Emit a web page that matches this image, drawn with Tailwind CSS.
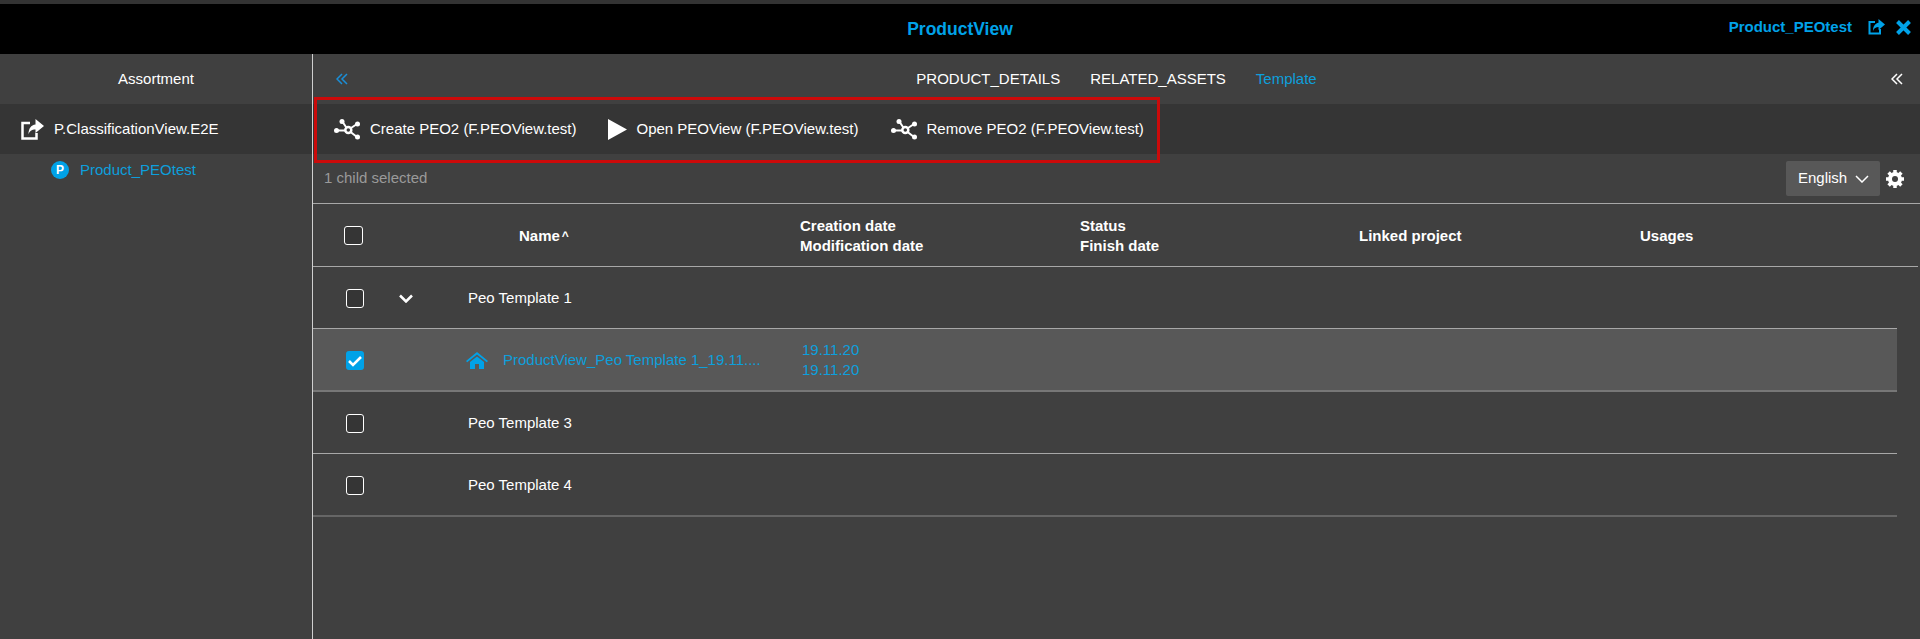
<!DOCTYPE html>
<html lang="en">
<head>
  <meta charset="UTF-8" />
  <title>ProductView</title>
  <script src="https://cdn.jsdelivr.net/npm/@tailwindcss/browser@4"></script>
</head>
<body class="h-[639px] overflow-hidden bg-[#404040] font-['Liberation_Sans',Arial,sans-serif] text-[15px] text-white">

  <!-- Top bar -->
  <header class="h-[54px] border-t-4 border-[#333333] bg-black flex items-center relative">
    <h1 class="w-full text-center text-[17.500px] font-bold text-[#00a2e8]">ProductView</h1>
    <div class="absolute right-[9px] top-0 h-full pb-1 flex items-center text-[#00a2e8]">
      <span class="font-bold">Product_PEOtest</span>
      <svg class="ml-[16px] w-[17px] h-[16px]" viewBox="0 0 17 16" fill="none" stroke="currentColor"><path d="M7 3H1.500v11.500h10.500V10" stroke-width="2"/><path d="M10.500 0L17 5.500 10.500 11V8C8 8 6 9 5 12 5 7.500 7 4.500 10.500 3.800z" fill="currentColor" stroke="none"/></svg>
      <svg class="ml-[11px] w-[15px] h-[15px]" viewBox="0 0 15 15" fill="none" stroke="currentColor" stroke-width="4"><path d="M1.500 1.500l12 12M13.500 1.500l-12 12"/></svg>
    </div>
  </header>

  <div class="flex h-[585px]">
    <!-- Sidebar -->
    <aside class="w-[313px] shrink-0 border-r border-[#cfcfcf]">
      <div class="h-[50px] flex items-center justify-center">Assortment</div>
      <div class="h-[50px] bg-[#353535] flex items-center pl-[21px] gap-[10px]">
        <svg class="w-[23px] h-[21px]" viewBox="0 0 23 21" fill="none" stroke="white"><path d="M9 4H1.500v15.500h14V14" stroke-width="2.500"/><path d="M14.500 0L23 7l-8.500 7v-3.500c-4 0-6 1.500-7 5 0-6 2.500-9.500 7-10z" fill="white" stroke="none"/></svg>
        <span>P.ClassificationView.E2E</span>
      </div>
      <div class="flex items-center pl-[51px] pt-[5px] gap-[11px] text-[#0d9fdc]">
        <span class="w-[18px] h-[18px] rounded-full bg-[#00a2e8] text-white text-[12px] font-bold flex items-center justify-center">P</span>
        <span>Product_PEOtest</span>
      </div>
    </aside>

    <main class="flex-1 min-w-0 relative">
      <!-- Tabs -->
      <div class="h-[50px] flex items-center justify-center relative gap-[30px]">
        <span>PRODUCT_DETAILS</span>
        <span>RELATED_ASSETS</span>
        <span class="text-[#0d9fdc] pt-[1px]">Template</span>
        <svg class="absolute left-[23px] top-[19px] w-[12px] h-[12px]" viewBox="0 0 12 12" fill="none" stroke="#1a8fd8" stroke-width="1.500"><path d="M6 1L1 6l5 5M11 1L6 6l5 5"/></svg>
        <svg class="absolute right-[17px] top-[19px] w-[12px] h-[12px]" viewBox="0 0 12 12" fill="none" stroke="white" stroke-width="1.500"><path d="M6 1L1 6l5 5M11 1L6 6l5 5"/></svg>
      </div>

      <!-- Toolbar -->
      <div class="h-[50px] bg-[#353535] flex items-center pl-[21px]">
        <svg class="w-[26px] h-[21px] mr-[10px]" viewBox="0 0 26 21" fill="white" stroke="white"><path d="M3 11.500h11M8 2l6 9M14 11l9-6M14 11l9 7" stroke-width="2"/><circle cx="2.500" cy="11.500" r="2.500" stroke="none"/><circle cx="8" cy="2.500" r="2.500" stroke="none"/><circle cx="23.500" cy="5" r="2.500" stroke="none"/><circle cx="23.500" cy="18" r="2.500" stroke="none"/><circle cx="14.300" cy="11" r="3" fill="#353535" stroke-width="2.500"/></svg>
        <span class="mr-[32px]">Create PEO2 (F.PEOView.test)</span>
        <svg class="w-[19px] h-[21px] mr-[9px]" viewBox="0 0 19 21" fill="white"><path d="M0 0l19 10.500L0 21z"/></svg>
        <span class="mr-[32px]">Open PEOView (F.PEOView.test)</span>
        <svg class="w-[26px] h-[21px] mr-[10px]" viewBox="0 0 26 21" fill="white" stroke="white"><path d="M3 11.500h11M8 2l6 9M14 11l9-6M14 11l9 7" stroke-width="2"/><circle cx="2.500" cy="11.500" r="2.500" stroke="none"/><circle cx="8" cy="2.500" r="2.500" stroke="none"/><circle cx="23.500" cy="5" r="2.500" stroke="none"/><circle cx="23.500" cy="18" r="2.500" stroke="none"/><circle cx="14.300" cy="11" r="3" fill="#353535" stroke-width="2.500"/></svg>
        <span>Remove PEO2 (F.PEOView.test)</span>
      </div>

      <!-- Red highlight over the toolbar -->
      <div class="absolute left-[1px] top-[43px] w-[846px] h-[66px] border-[3px] border-[#cc0a0a]"></div>

      <!-- Selection info and language -->
      <div class="h-[49px] flex items-center pl-[11px] pr-[15px] text-[#9a9a9a]">
        <span class="flex-1">1 child selected</span>
        <div class="w-[94px] h-[35px] rounded-[2px] bg-[#585858] text-white flex items-center pl-[12px] gap-[8px]">
          English
          <svg class="w-[14px] h-[8px]" viewBox="0 0 14 8" fill="none" stroke="white" stroke-width="1.500"><path d="M1 1l6 6 6-6"/></svg>
        </div>
        <svg class="w-[20px] h-[20px] ml-[5px]" viewBox="0 0 20 20"><path d="M10 1v18M1 10h18M3.600 3.600l12.800 12.800M16.400 3.600L3.600 16.400" stroke="white" stroke-width="3.500"/><circle cx="10" cy="10" r="7" fill="white"/><circle cx="10" cy="10" r="3" fill="#404040"/></svg>
      </div>

      <!-- Table header -->
      <div class="h-[64px] border-t border-[#a8a8a8] grid grid-cols-[206px_281px_280px_279px_281px_1fr] items-center font-bold leading-[20px]">
        <span class="pl-[31px]"><span class="block w-[19px] h-[19px] rounded-[3px] border border-white bg-[#353535]"></span></span>
        <span>Name<span class="ml-[2px] text-[12px] align-top">^</span></span>
        <span>Creation date<br />Modification date</span>
        <span>Status<br />Finish date</span>
        <span>Linked project</span>
        <span>Usages</span>
      </div>
      <div class="w-[1605px] h-px -mt-px bg-[#a8a8a8]"></div>

      <!-- Rows -->
      <div class="w-[1584px]">
        <div class="h-[62px] pt-[2px] border-b border-[#a8a8a8] flex items-center">
          <span class="ml-[33px] w-[18px] h-[19px] rounded-[3px] border border-white bg-[#353535]"></span>
          <svg class="ml-[35px] w-[14px] h-[9px]" viewBox="0 0 14 9" fill="none" stroke="white" stroke-width="2.500"><path d="M1 1.500l6 6 6-6"/></svg>
          <span class="ml-[55px]">Peo Template 1</span>
        </div>
        <div class="h-[63px] pt-[2px] bg-[#585858] border-b-2 border-[#777777] flex items-center text-[#0d9fdc]">
          <span class="ml-[33px] w-[18px] h-[19px] rounded-[3px] bg-[#00a2e8] flex items-center justify-center">
            <svg class="w-[14px] h-[12px]" viewBox="0 0 14 12" fill="none" stroke="white" stroke-width="2.500"><path d="M1 6l4 4 8-8"/></svg>
          </span>
          <svg class="ml-[102px] w-[22px] h-[17px]" viewBox="0 0 22 17" fill="#00a2e8"><path d="M11 0l11 9-1.200 1.300L11 2.500 1.200 10.300 0 9z"/><path d="M4 10L11 4.500l7 5.500v7h-5v-5H9v5H4z"/></svg>
          <span class="ml-[15px] w-[299px]">ProductView_Peo Template 1_19.11....</span>
          <span class="-mt-[1px] leading-[20px]">19.11.20<br />19.11.20</span>
        </div>
        <div class="h-[62px] pt-[2px] border-b border-[#a8a8a8] flex items-center">
          <span class="ml-[33px] w-[18px] h-[19px] rounded-[3px] border border-white bg-[#353535]"></span>
          <span class="ml-[104px]">Peo Template 3</span>
        </div>
        <div class="h-[63px] pt-[2px] border-b-2 border-[#666666] flex items-center">
          <span class="ml-[33px] w-[18px] h-[19px] rounded-[3px] border border-white bg-[#353535]"></span>
          <span class="ml-[104px]">Peo Template 4</span>
        </div>
      </div>
    </main>
  </div>

</body>
</html>
